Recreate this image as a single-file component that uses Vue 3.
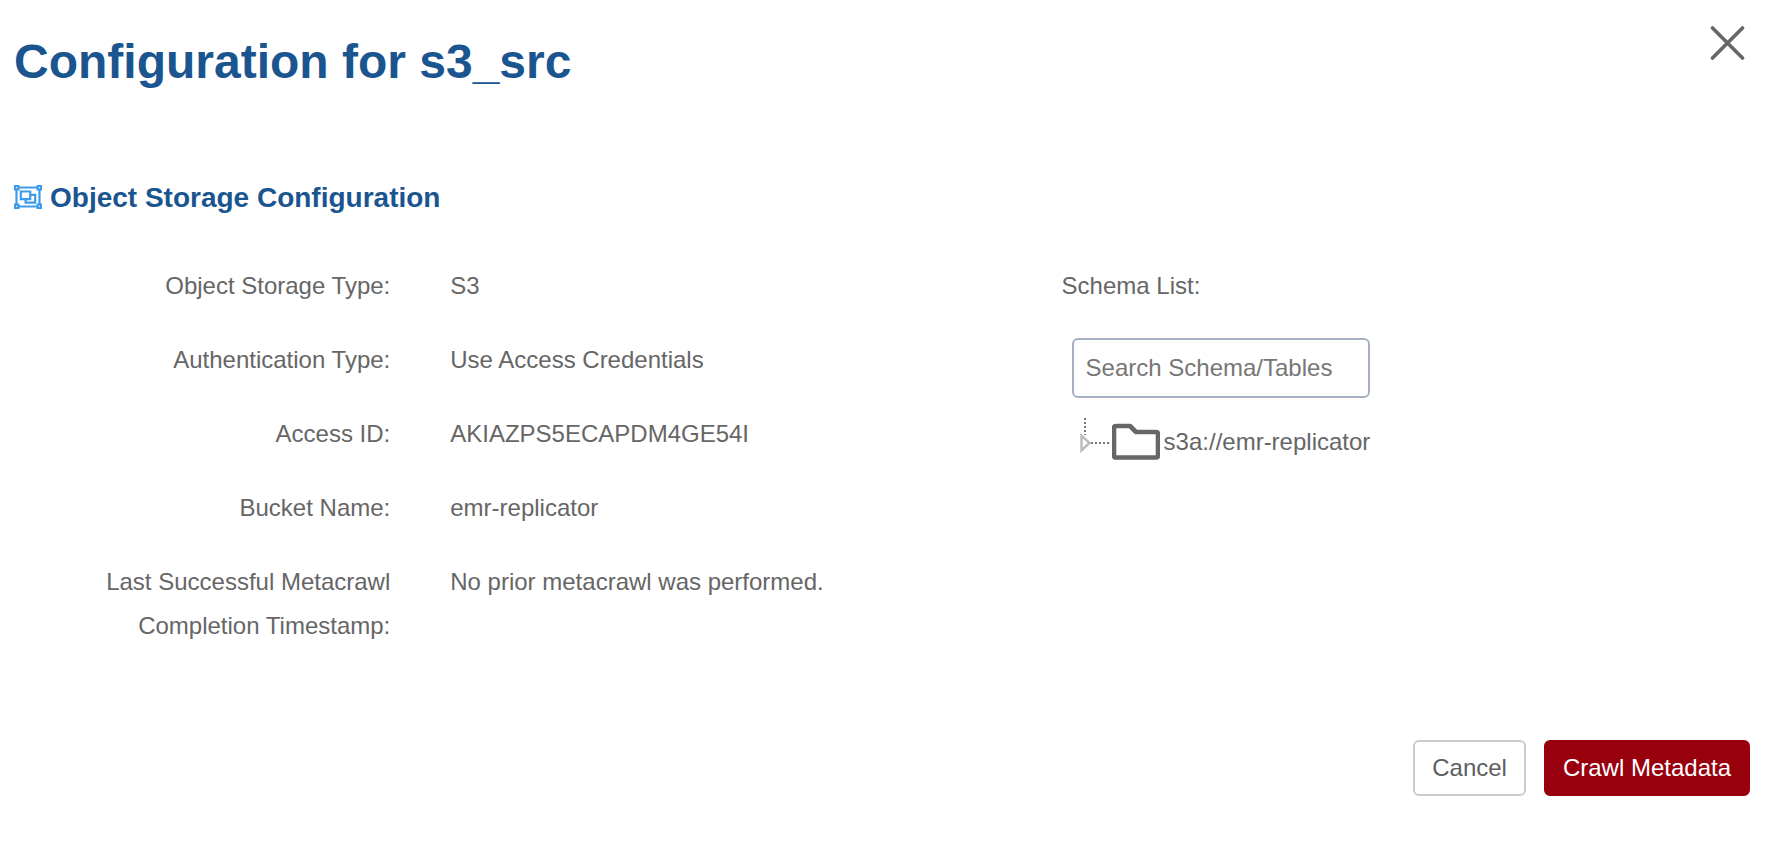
<script setup>
import { ref, computed } from "vue";

const source = ref("s3_src");
const search = ref("");
const details = [
  { label: "Object Storage Type:", value: "S3" },
  { label: "Authentication Type:", value: "Use Access Credentials" },
  { label: "Access ID:", value: "AKIAZPS5ECAPDM4GE54I" },
  { label: "Bucket Name:", value: "emr-replicator" },
  {
    label: "Last Successful Metacrawl Completion Timestamp:",
    value: "No prior metacrawl was performed.",
  },
];
const schemas = ref(["s3a://emr-replicator"]);

const filteredSchemas = computed(() =>
  schemas.value.filter((name) =>
    name.toLowerCase().includes(search.value.toLowerCase())
  )
);
</script>

<template>
  <div class="config">
    <header class="config-header">
      <h1>Configuration for {{ source }}</h1>
      <button type="button" class="close" aria-label="Close">
        <svg width="36" height="36" viewBox="0 0 36 36">
          <path d="M2.5 4L32.5 34M32.5 4L2.5 34" />
        </svg>
      </button>
    </header>

    <h2>
      <svg class="group-icon" width="28" height="26" viewBox="0 0 28 26">
        <path d="M4 2.5H24M4 21.5H24M2.5 4V20M25.5 4V20" />
        <path d="M6.8 6.5H16.2V14.2H6.8ZM16.2 9.8H21.2V17.6H11.6V14.2" />
        <path
          class="corner"
          d="M1 1H4.4V4.4H1ZM23.6 1H27V4.4H23.6ZM1 19.6H4.4V23H1ZM23.6 19.6H27V23H23.6Z"
        />
      </svg>
      Object Storage Configuration
    </h2>

    <div class="config-body">
      <dl class="details">
        <template v-for="item in details" :key="item.label">
          <dt>{{ item.label }}</dt>
          <dd>{{ item.value }}</dd>
        </template>
      </dl>

      <div class="schemas">
        <label for="schemaSearch">Schema List:</label>
        <input
          id="schemaSearch"
          v-model="search"
          type="text"
          placeholder="Search Schema/Tables"
        />
        <ul class="tree">
          <li v-for="name in filteredSchemas" :key="name">
            <button type="button" class="toggle" aria-label="Expand">
              <svg width="32" height="44" viewBox="0 0 32 44">
                <path class="dots" d="M5 0V17M11 25H31" />
                <path class="arrow" d="M1.5 17.5V32.5L9.5 25Z" />
              </svg>
            </button>
            <svg class="folder" width="48" height="44" viewBox="0 0 48 44">
              <path
                d="M4 8H18L24 14H44Q46 14 46 16V37.5Q46 39.5 44 39.5H4Q2 39.5 2 37.5V10Q2 8 4 8Z"
              />
            </svg>
            <span>{{ name }}</span>
          </li>
        </ul>
      </div>
    </div>

    <footer class="config-footer">
      <button type="button" class="btn">Cancel</button>
      <button type="button" class="btn btn-primary">Crawl Metadata</button>
    </footer>
  </div>
</template>

<style>
body {
  margin: 0;
  background: #fff;
}
</style>

<style scoped>
.config {
  padding: 24px 18px 46px 14px;
  color: #666;
  font-family: "Liberation Sans", Arial, sans-serif;
  font-size: 24px;
  line-height: 44px;
}
.config-header {
  display: flex;
  justify-content: space-between;
  align-items: flex-start;
}
h1,
h2 {
  margin: 0;
  color: #1b5590;
}
h1 {
  font-size: 48px;
  line-height: 76px;
}
h2 {
  display: flex;
  align-items: center;
  gap: 8px;
  margin-top: 76px;
  font-size: 28px;
}
.close {
  display: flex;
  margin-right: 4px;
  padding: 0;
  border: none;
  background: none;
  cursor: pointer;
}
.close path {
  fill: none;
  stroke: #666;
  stroke-width: 3.6;
  stroke-linecap: round;
}
.group-icon path {
  fill: none;
  stroke: #3d9be9;
  stroke-width: 2.2;
}
.group-icon .corner {
  fill: #fff;
}
.config-body {
  display: grid;
  grid-template-columns: 3fr 2fr;
  margin-top: 44px;
}
.details {
  display: grid;
  grid-template-columns: 36% 1fr;
  column-gap: 60px;
  row-gap: 30px;
  align-content: start;
  margin: 0;
  padding-left: 2px;
}
dt {
  padding-left: 60px;
  text-align: right;
}
dd {
  margin: 0;
}
.schemas {
  display: flex;
  flex-direction: column;
  align-items: flex-start;
  padding-left: 6px;
}
.schemas input {
  box-sizing: border-box;
  width: 298px;
  height: 60px;
  margin: 30px 0 0 10px;
  padding: 0 12px;
  border: 2px solid #a5b1c2;
  border-radius: 6px;
  color: #666;
  font: inherit;
}
.schemas input::placeholder {
  color: #777;
  opacity: 1;
}
.tree {
  margin: 20px 0 0 18px;
  padding: 0;
  list-style: none;
}
.tree li {
  display: flex;
  align-items: flex-start;
  line-height: 48px;
}
.toggle {
  display: flex;
  padding: 0;
  border: none;
  background: none;
  cursor: pointer;
}
.tree .dots {
  fill: none;
  stroke: #777;
  stroke-width: 2;
  stroke-dasharray: 2 2;
}
.tree .arrow {
  fill: #fff;
  stroke: #bbb;
  stroke-width: 2.4;
}
.folder path {
  fill: none;
  stroke: #666;
  stroke-width: 4.6;
  stroke-linejoin: round;
}
.tree span {
  margin-left: 4px;
}
.config-footer {
  display: flex;
  justify-content: flex-end;
  gap: 18px;
  margin-top: 92px;
}
.btn {
  padding: 4px 17px;
  border: 2px solid #ccc;
  border-radius: 6px;
  background: #fff;
  color: #5c5f61;
  font: inherit;
  cursor: pointer;
}
.btn-primary {
  border-color: #97000c;
  background: #97000c;
  color: #fff;
}
</style>
